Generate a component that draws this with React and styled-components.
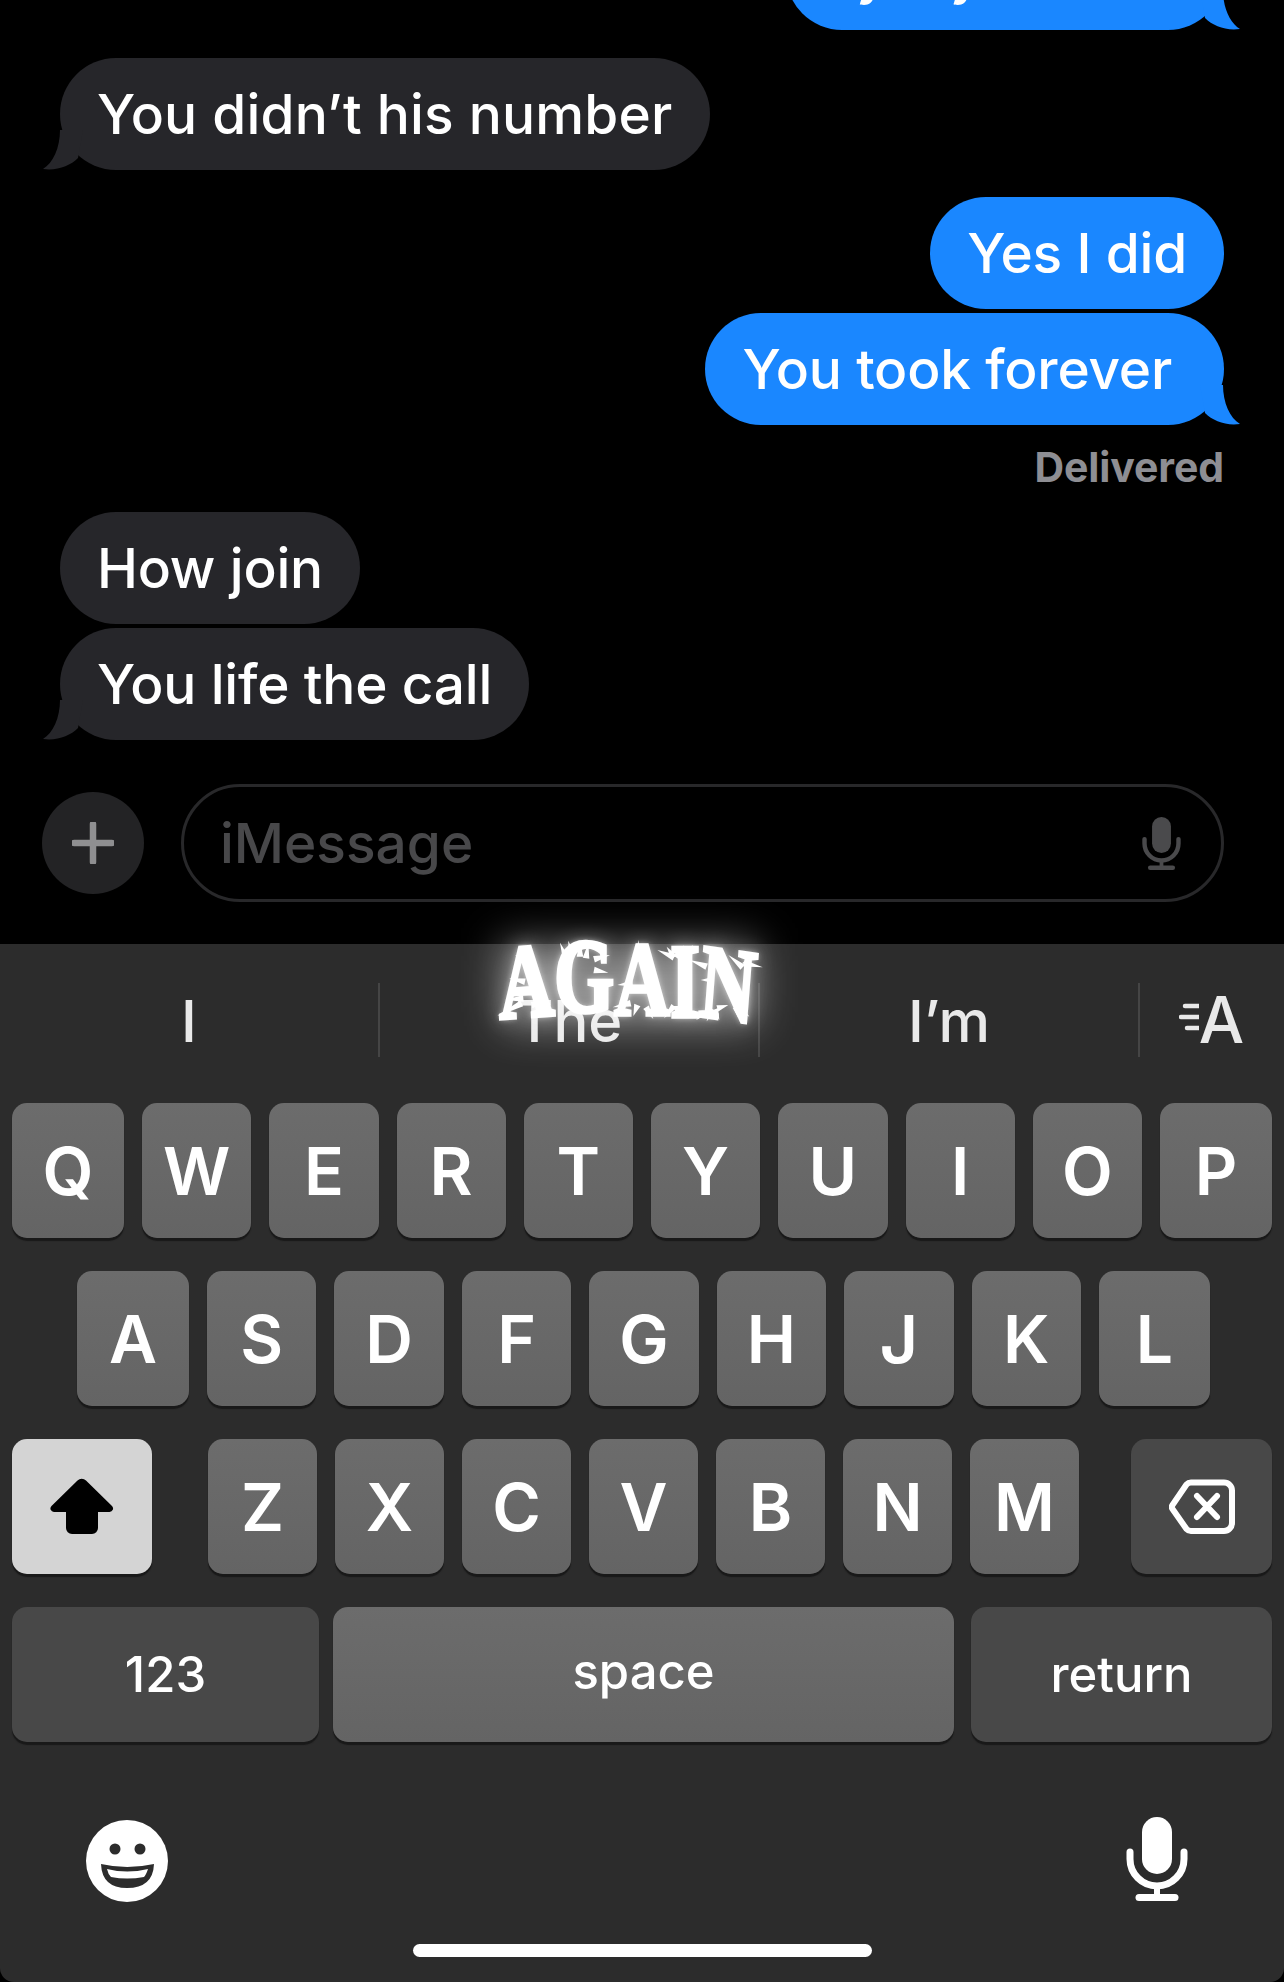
import React from 'react';
import styled, { createGlobalStyle } from 'styled-components';

const GlobalStyle = createGlobalStyle`
  html, body {
    margin: 0;
    padding: 0;
    background: #000;
  }
`;

const Page = styled.div`
  position: relative;
  width: 1284px;
  height: 1982px;
  overflow: hidden;
  background: #000;
  font-family: Inter, "Liberation Sans", sans-serif;
  display: flex;
  flex-direction: column;
`;

const Thread = styled.div`
  height: 944px;
  flex: none;
  box-sizing: border-box;
  padding: 0 60px;
  display: flex;
  flex-direction: column;
`;

const Bubble = styled.div`
  position: relative;
  align-self: ${(p) => (p.$mine ? 'flex-end' : 'flex-start')};
  margin-top: ${(p) => p.$top}px;
  height: 112px;
  flex: none;
  box-sizing: border-box;
  padding: 0 ${(p) => 37 + (p.$extra ?? 0)}px 0 37px;
  border-radius: 56px;
  background: ${(p) => (p.$mine ? '#1a87ff' : '#26262a')};
  color: #fff;
  font-size: 55px;
  font-weight: 500;
  line-height: 112px;
  letter-spacing: ${(p) => p.$track ?? -0.2}px;
  white-space: nowrap;
`;

const TailSvg = styled.svg`
  position: absolute;
  bottom: 0;
  ${(p) => (p.$mine ? 'right: -16px; transform: scaleX(-1);' : 'left: -17px;')}
  width: 40px;
  height: 40px;
`;

const Status = styled.div`
  align-self: flex-end;
  margin-top: 18px;
  height: 49px;
  color: #8e8e93;
  font-size: 41px;
  font-weight: 700;
  line-height: 49px;
  letter-spacing: -0.1px;
`;

const ComposeRow = styled.div`
  margin: 44px 0 0 -18px;
  display: flex;
  align-items: center;
  gap: 37px;
`;

const PlusButton = styled.div`
  width: 102px;
  height: 102px;
  flex: none;
  border-radius: 50%;
  background: #232325;
  display: flex;
  align-items: center;
  justify-content: center;
`;

const InputField = styled.div`
  flex: 1;
  height: 118px;
  box-sizing: border-box;
  border: 3px solid #28282a;
  border-radius: 59px;
  padding: 0 40px 0 36px;
  display: flex;
  align-items: center;
  justify-content: space-between;
  color: #48484a;
  font-size: 55px;
  font-weight: 500;
`;

const Keyboard = styled.div`
  flex: 1;
  background: #2c2c2c;
  border-radius: 0 0 14px 14px;
  display: flex;
  flex-direction: column;
`;

const SuggestionBar = styled.div`
  height: 159px;
  flex: none;
  box-sizing: border-box;
  padding-top: 39px;
  display: flex;
  align-items: flex-start;
`;

const Suggestion = styled.div`
  width: ${(p) => p.$width}px;
  height: 74px;
  flex: none;
  box-sizing: border-box;
  border-right: 2px solid #454545;
  padding-top: 2px;
  display: flex;
  align-items: center;
  justify-content: center;
  color: #e9e9e9;
  font-size: 58px;
  font-weight: 450;
  line-height: 72px;
`;

const TextSizeCell = styled.div`
  flex: 1;
  height: 74px;
  display: flex;
  align-items: center;
  justify-content: flex-end;
  gap: 0;
  padding-right: 40px;
  color: #e9e9e9;
  font-size: 64px;
  font-weight: 500;
  line-height: 74px;
`;

const KeyRows = styled.div`
  display: flex;
  flex-direction: column;
  gap: 33px;
`;

const KeyRow = styled.div`
  height: 135px;
  box-sizing: border-box;
  padding: 0 ${(p) => p.$right ?? 12}px 0 ${(p) => p.$left ?? 12}px;
  display: flex;
  gap: ${(p) => p.$gap ?? 18}px;
`;

const Key = styled.div`
  flex: ${(p) => (p.$width ? `0 0 ${p.$width}px` : '1 1 0')};
  min-width: 0;
  margin-left: ${(p) => p.$after ?? 0}px;
  padding-bottom: ${(p) => p.$lift ?? 0}px;
  box-sizing: border-box;
  border-radius: 15px;
  box-shadow: 0 3px 1px #191919;
  background: ${(p) =>
    p.$tone === 'dark' ? '#484848' : p.$tone === 'light' ? '#d4d4d4' : 'linear-gradient(180deg, #6c6c6c, #646464)'};
  color: #fff;
  display: flex;
  align-items: center;
  justify-content: center;
  font-size: ${(p) => (p.$small ? 49 : 66)}px;
  font-weight: ${(p) => (p.$small ? 500 : 600)};
`;

const BottomBar = styled.div`
  height: 120px;
  margin-top: 59px;
  padding: 0 96px 0 86px;
  display: flex;
  align-items: center;
  justify-content: space-between;
`;

const BigMic = styled.div`
  display: flex;
  margin-bottom: 4px;
`;

const HomeIndicator = styled.div`
  width: 459px;
  height: 13px;
  margin: 23px auto 0;
  border-radius: 7px;
  background: #fff;
`;

const Sticker = styled.div`
  position: absolute;
  left: 440px;
  top: 920px;
  width: 360px;
  height: 150px;
  pointer-events: none;

  &::before {
    content: '';
    position: absolute;
    left: 62px;
    top: 22px;
    width: 255px;
    height: 84px;
    background: rgba(255, 255, 255, 0.42);
    filter: blur(20px);
  }
`;

const StickerWord = styled.div`
  position: absolute;
  left: 58px;
  top: 6px;
  display: flex;
  transform: scaleX(0.73);
  transform-origin: left top;
  color: #fff;
  font-family: "Liberation Serif", serif;
  font-weight: 700;
  font-size: 106px;
  line-height: 106px;
  -webkit-text-stroke: 3.5px #fff;
  text-shadow: 0 0 8px rgba(255, 255, 255, 0.8), 0 0 22px rgba(255, 255, 255, 0.5);
`;

const StickerLetter = styled.span`
  display: block;
  transform: translateY(${(p) => p.$lift}px) rotate(${(p) => p.$rotate}deg);
`;

const ThornSvg = styled.svg`
  position: absolute;
  left: 0;
  top: 0;
  width: 360px;
  height: 150px;
`;

const Tail = ({ mine }) => (
  <TailSvg $mine={mine} viewBox="0 0 40 40">
    <path
      d="M17 0 C17 18 10 33 0 39 C14 41 27 36 35 28 L40 0 Z"
      fill={mine ? '#1a87ff' : '#26262a'}
    />
  </TailSvg>
);

const MicIcon = ({ width, height, color }) => (
  <svg width={width} height={height} viewBox="0 0 62 84" fill="none">
    <rect x="16" y="0" width="30" height="57" rx="15" fill={color} />
    <path d="M4 35 V42 a27 27 0 0 0 54 0 V35" stroke={color} strokeWidth="7" strokeLinecap="round" />
    <path d="M31 70 V80" stroke={color} strokeWidth="6" />
    <path d="M13 80.5 H49" stroke={color} strokeWidth="7" strokeLinecap="round" />
  </svg>
);

const PlusIcon = () => (
  <svg width="42" height="42" viewBox="0 0 42 42" fill="none">
    <path d="M21 2 V40 M2 21 H40" stroke="#8f8f91" strokeWidth="6.5" strokeLinecap="round" />
  </svg>
);

const ShiftIcon = () => (
  <svg width="66" height="57" viewBox="0 0 66 57">
    <path
      d="M28.5 2.5 a6 6 0 0 1 8.5 0 L63 28 a3.5 3.5 0 0 1 -2.5 6 H49 V50 a6 6 0 0 1 -6 6 H23 a6 6 0 0 1 -6 -6 V34 H5 a3.5 3.5 0 0 1 -2.5 -6 Z"
      fill="#000"
    />
  </svg>
);

const DeleteIcon = () => (
  <svg width="66" height="56" viewBox="0 0 66 56" fill="none">
    <path
      d="M22 3.5 H55 a8 8 0 0 1 8 8 V44 a8 8 0 0 1 -8 8 H22 a6 6 0 0 1 -4.5 -2 L3.5 30 a3.5 3.5 0 0 1 0 -4 L17.5 5.5 a6 6 0 0 1 4.5 -2 Z"
      stroke="#fff"
      strokeWidth="6"
      strokeLinejoin="round"
    />
    <path d="M28 17 L48 38 M48 17 L28 38" stroke="#fff" strokeWidth="6" strokeLinecap="round" />
  </svg>
);

const EmojiIcon = () => (
  <svg width="82" height="82" viewBox="0 0 82 82">
    <circle cx="41" cy="41" r="41" fill="#fff" />
    <circle cx="29" cy="29" r="5.5" fill="#2c2c2c" />
    <circle cx="54" cy="29" r="5.5" fill="#2c2c2c" />
    <path d="M15 44 Q41 50 68 44 Q67 68 41 68 Q16 68 15 44 Z" fill="#2c2c2c" />
    <path d="M21 49 Q41 54 62 49 Q60 55 58 57 Q41 60 25 57 Q22 54 21 49 Z" fill="#fff" />
  </svg>
);

const TextSizeLines = () => (
  <svg width="20" height="34" viewBox="0 0 20 34" fill="none">
    <path d="M6 3 H20 M2 14 H20 M8 25 H20" stroke="#e9e9e9" strokeWidth="4.5" strokeLinecap="round" />
  </svg>
);

// thorn tips around the sticker letters, in 3x crop coordinates, with the point they grow from
const thorns = [
  [172, 288, 245, 250], [208, 175, 255, 185], [196, 240, 250, 235], [265, 78, 262, 140],
  [225, 105, 262, 125], [318, 245, 275, 255],
  [360, 68, 378, 115], [385, 62, 395, 110], [420, 62, 420, 110], [445, 70, 438, 115],
  [510, 105, 462, 118], [505, 158, 462, 150],
  [595, 60, 595, 125], [532, 195, 578, 190], [518, 262, 572, 250], [580, 288, 592, 255],
  [640, 297, 618, 262], [652, 90, 702, 112], [680, 80, 702, 112], [760, 75, 712, 112], [732, 76, 708, 112],
  [672, 295, 702, 258], [748, 288, 718, 258], [710, 292, 710, 258],
  [748, 120, 800, 140], [865, 105, 908, 142], [968, 142, 912, 130], [938, 102, 915, 135],
  [782, 180, 820, 180], [768, 300, 812, 268], [865, 255, 832, 265], [800, 304, 818, 268],
  [928, 290, 898, 262], [895, 294, 888, 262], [838, 300, 825, 268],
];

const thornPoints = ([tx, ty, bx, by]) => {
  const dx = bx - tx;
  const dy = by - ty;
  const len = Math.hypot(dx, dy);
  const nx = (-dy / len) * 10;
  const ny = (dx / len) * 10;
  return `${tx},${ty} ${bx + nx},${by + ny} ${bx - nx},${by - ny}`;
};

const row1 = ['W', 'E', 'R', 'T', 'Y', 'U', 'I', 'O'];
const row2 = ['S', 'D', 'F', 'G', 'H', 'J', 'K'];
const row3 = ['X', 'C', 'V', 'B', 'N', 'M'];

const stickerLetters = [
  { ch: 'A', rotate: -3, lift: 3 },
  { ch: 'G', rotate: 0, lift: -2 },
  { ch: 'A', rotate: 0, lift: 1 },
  { ch: 'I', rotate: 0, lift: 3 },
  { ch: 'N', rotate: 6, lift: 6 },
];

export default function App() {
  return (
    <Page>
      <GlobalStyle />
      <Thread>
        <Bubble $mine $top={-82} $extra={16}>
          by my old file
          <Tail mine />
        </Bubble>
        <Bubble $top={28} $track={0.2}>
          You didn’t his number
          <Tail />
        </Bubble>
        <Bubble $mine $top={27}>Yes I did</Bubble>
        <Bubble $mine $top={4} $extra={15}>
          You took forever
          <Tail mine />
        </Bubble>
        <Status>Delivered</Status>
        <Bubble $top={20}>How join</Bubble>
        <Bubble $top={4}>
          You life the call
          <Tail />
        </Bubble>
        <ComposeRow>
          <PlusButton>
            <PlusIcon />
          </PlusButton>
          <InputField>
            iMessage
            <MicIcon width={39} height={53} color="#4a4a4c" />
          </InputField>
        </ComposeRow>
      </Thread>

      <Keyboard>
        <SuggestionBar>
          <Suggestion $width={380}>I</Suggestion>
          <Suggestion $width={380}>The</Suggestion>
          <Suggestion $width={380}>I’m</Suggestion>
          <TextSizeCell>
            <TextSizeLines />
            A
          </TextSizeCell>
        </SuggestionBar>

        <KeyRows>
          <KeyRow>
            <Key $width={112}>Q</Key>
            {row1.map((k) => (
              <Key key={k}>{k}</Key>
            ))}
            <Key $width={112}>P</Key>
          </KeyRow>
          <KeyRow $left={77} $right={74}>
            <Key $width={112}>A</Key>
            {row2.map((k) => (
              <Key key={k}>{k}</Key>
            ))}
            <Key $width={111}>L</Key>
          </KeyRow>
          <KeyRow>
            <Key $width={140} $tone="light">
              <ShiftIcon />
            </Key>
            <Key $width={109} $after={38}>Z</Key>
            {row3.map((k) => (
              <Key key={k} $width={109}>{k}</Key>
            ))}
            <Key $tone="dark" $after={34}>
              <DeleteIcon />
            </Key>
          </KeyRow>
          <KeyRow $gap={14}>
            <Key $width={307} $tone="dark" $small>123</Key>
            <Key $width={621} $small $lift={6}>space</Key>
            <Key $tone="dark" $small $after={3}>return</Key>
          </KeyRow>
        </KeyRows>

        <BottomBar>
          <EmojiIcon />
          <BigMic>
            <MicIcon width={62} height={84} color="#fff" />
          </BigMic>
        </BottomBar>
        <HomeIndicator />
      </Keyboard>

      <Sticker>
        <StickerWord>
          {stickerLetters.map((l, i) => (
            <StickerLetter key={i} $rotate={l.rotate} $lift={l.lift}>
              {l.ch}
            </StickerLetter>
          ))}
        </StickerWord>
        <ThornSvg viewBox="0 0 1080 450">
          {thorns.map((t, i) => (
            <polygon key={i} points={thornPoints(t)} fill="#fff" />
          ))}
        </ThornSvg>
      </Sticker>
    </Page>
  );
}
